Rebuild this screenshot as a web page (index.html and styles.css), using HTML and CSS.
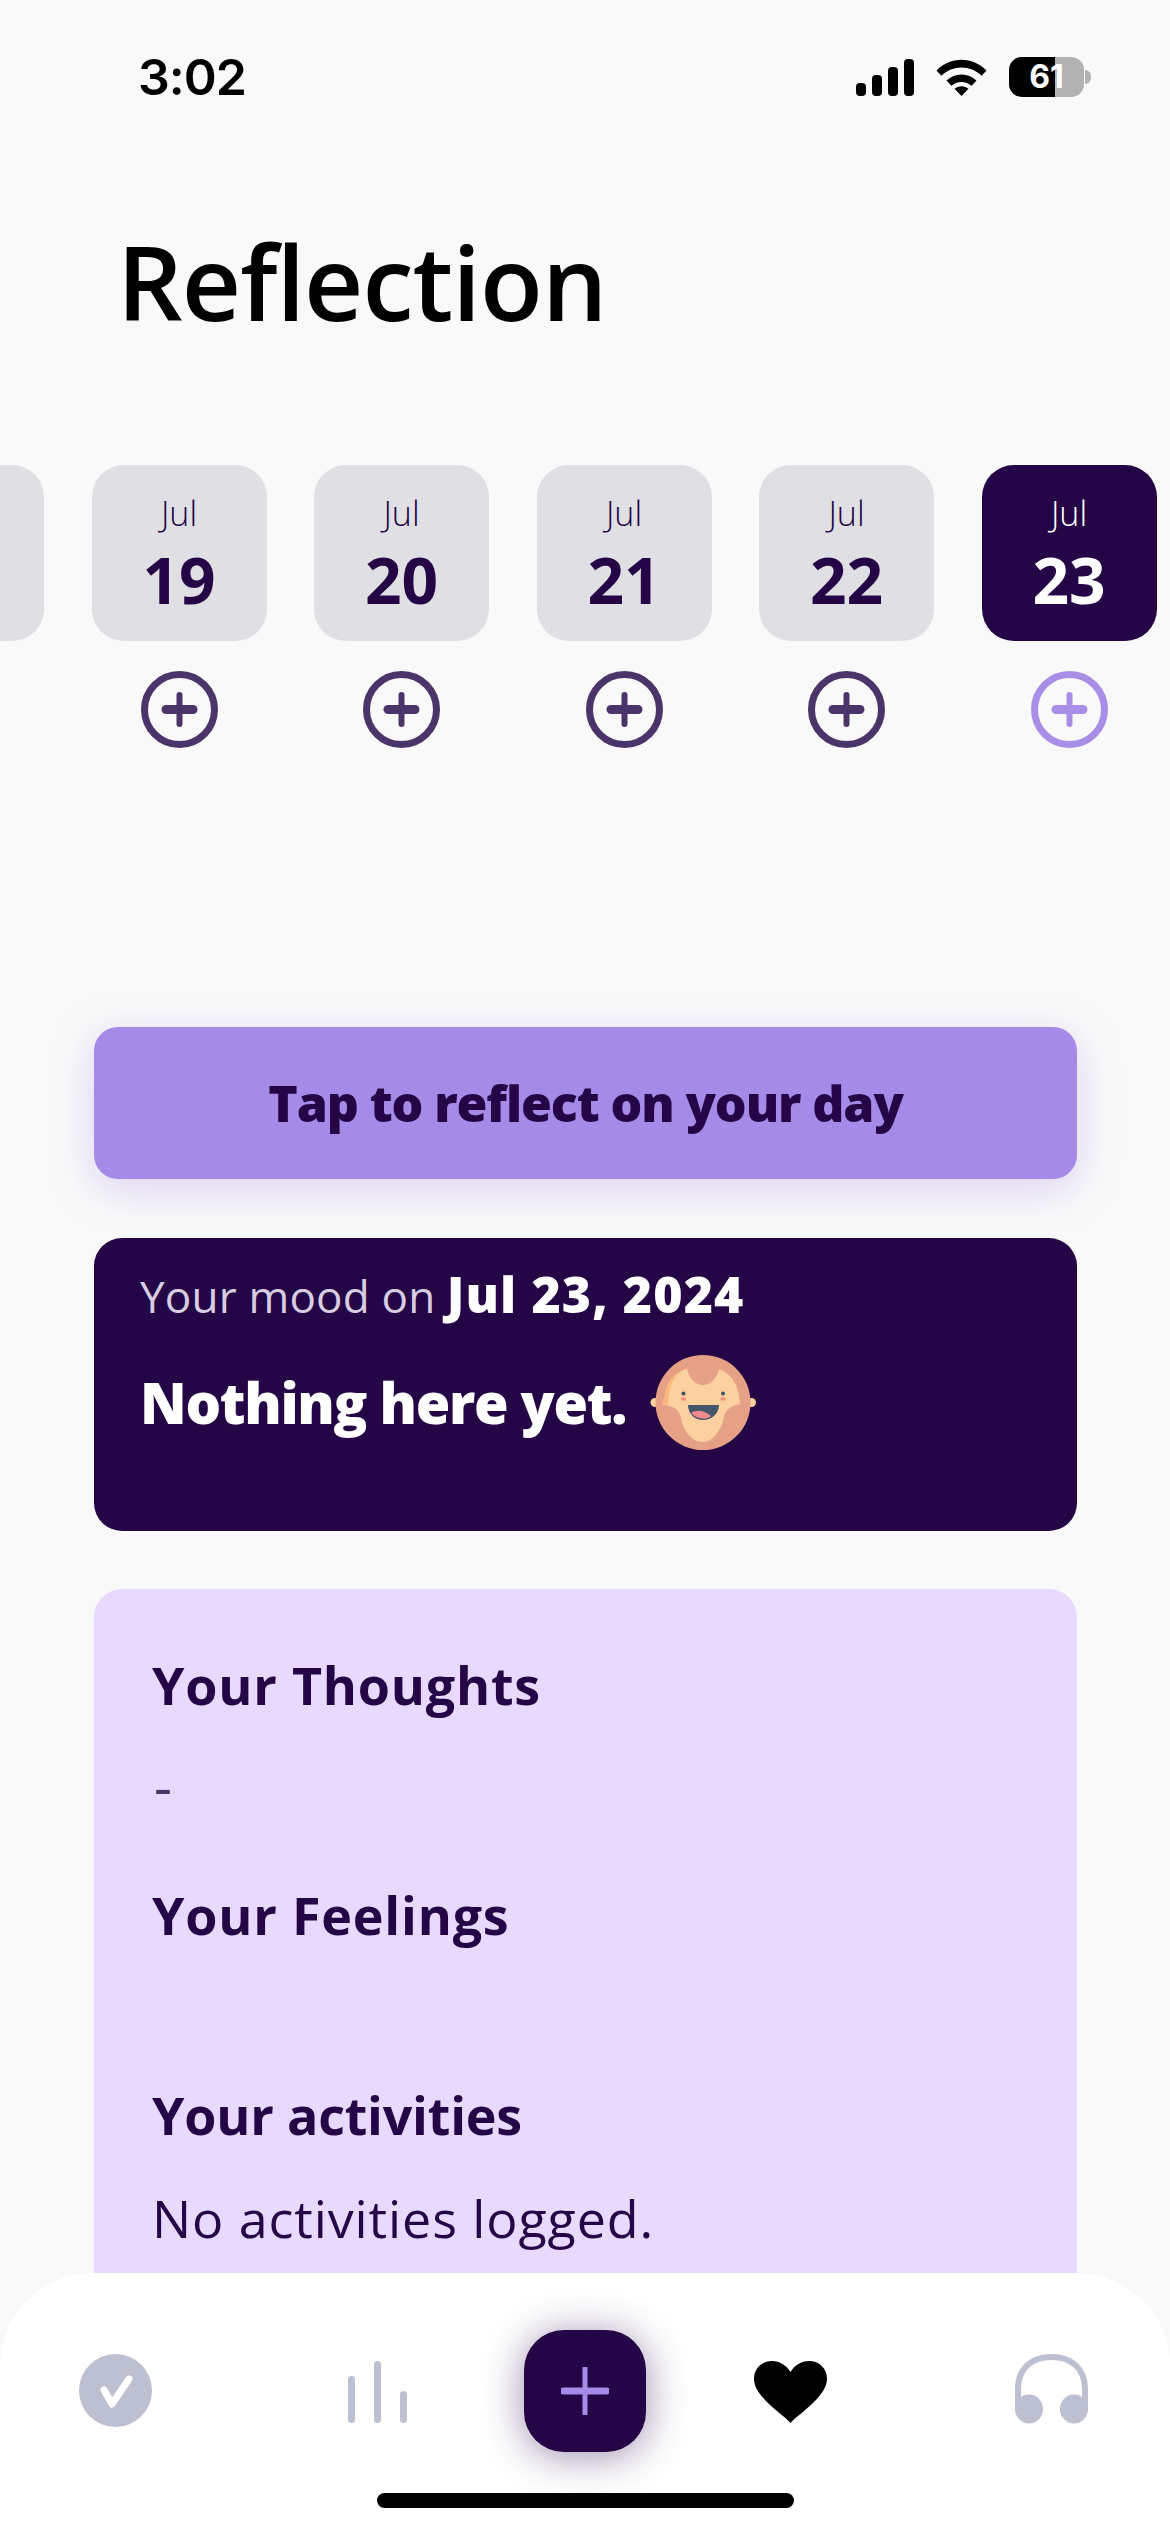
FILE: index.html
```html
<!DOCTYPE html>
<html lang="en">
<head>
<meta charset="utf-8">
<title>Reflection</title>
<link rel="stylesheet" href="styles.css">
</head>
<body>
<div class="page">
  <header class="status">
    <span class="time">3:02</span>
    <div class="status-icons">
      <svg class="signal" width="58" height="37" viewBox="0 0 58 37"><rect x="0" y="24" width="10" height="13" rx="4"/><rect x="16" y="16" width="10" height="21" rx="4"/><rect x="32" y="8" width="10" height="29" rx="4"/><rect x="48" y="0" width="10" height="37" rx="4"/></svg>
      <svg class="wifi" width="51" height="37" viewBox="0 0 51 37"><path d="M0.5 11.5C14.5 -2.8 36.5 -2.8 50.5 11.5L45.6 16.8C34.4 5.8 16.6 5.8 5.4 16.8Z"/><path d="M10.5 21.6C18.8 13.6 32.2 13.6 40.5 21.6L35.6 26.7C30 21.6 21 21.6 15.4 26.7Z"/><path d="M18.5 29.8C22.4 26.4 28.6 26.4 32.5 29.8L25.5 37Z"/></svg>
      <div class="battery"><span class="battery-level">61</span></div>
      <span class="battery-nub"></span>
    </div>
  </header>

  <h1 class="title">Reflection</h1>

  <section class="strip">
    <div class="day">
      <div class="date"></div>
    </div>
    <div class="day">
      <div class="date"><span class="month">Jul</span><span class="num">19</span></div>
      <svg class="add" width="77" height="77" viewBox="0 0 77 77"><circle cx="38.5" cy="38.5" r="35" fill="none" stroke-width="7"/><path d="M38.5 24V53" fill="none" stroke-width="6" stroke-linecap="round"/><path d="M25 38.5H52" fill="none" stroke-width="9" stroke-linecap="round"/></svg>
    </div>
    <div class="day">
      <div class="date"><span class="month">Jul</span><span class="num">20</span></div>
      <svg class="add" width="77" height="77" viewBox="0 0 77 77"><circle cx="38.5" cy="38.5" r="35" fill="none" stroke-width="7"/><path d="M38.5 24V53" fill="none" stroke-width="6" stroke-linecap="round"/><path d="M25 38.5H52" fill="none" stroke-width="9" stroke-linecap="round"/></svg>
    </div>
    <div class="day">
      <div class="date"><span class="month">Jul</span><span class="num">21</span></div>
      <svg class="add" width="77" height="77" viewBox="0 0 77 77"><circle cx="38.5" cy="38.5" r="35" fill="none" stroke-width="7"/><path d="M38.5 24V53" fill="none" stroke-width="6" stroke-linecap="round"/><path d="M25 38.5H52" fill="none" stroke-width="9" stroke-linecap="round"/></svg>
    </div>
    <div class="day">
      <div class="date"><span class="month">Jul</span><span class="num">22</span></div>
      <svg class="add" width="77" height="77" viewBox="0 0 77 77"><circle cx="38.5" cy="38.5" r="35" fill="none" stroke-width="7"/><path d="M38.5 24V53" fill="none" stroke-width="6" stroke-linecap="round"/><path d="M25 38.5H52" fill="none" stroke-width="9" stroke-linecap="round"/></svg>
    </div>
    <div class="day day-active">
      <div class="date"><span class="month">Jul</span><span class="num">23</span></div>
      <svg class="add" width="77" height="77" viewBox="0 0 77 77"><circle cx="38.5" cy="38.5" r="35" fill="none" stroke-width="7"/><path d="M38.5 24V53" fill="none" stroke-width="6" stroke-linecap="round"/><path d="M25 38.5H52" fill="none" stroke-width="9" stroke-linecap="round"/></svg>
    </div>
  </section>

  <main class="content">
    <div class="cta">Tap to reflect on your day</div>

    <div class="mood">
      <p class="mood-date"><span class="mood-label">Your mood on</span> <strong>Jul 23, 2024</strong></p>
      <div class="mood-row">
        <span class="mood-text">Nothing here yet.</span>
        <svg class="face" width="110" height="110" viewBox="15 17 110 110">
          <circle cx="24" cy="72.5" r="4.5" fill="#fdd09f"/>
          <circle cx="120.5" cy="72.5" r="4.5" fill="#fdd09f"/>
          <circle cx="72" cy="72.5" r="47.5" fill="#e5a085"/>
          <path d="M34 66C35 52 43 43 56 38.500C58 48 64 55 72 55C80 55 86 48 88 39C100 44 108 53 109 74C103 75 95 78 93 86C91 100 82 112 72 112C60 112 52 100 50 88C48 79 42 76 33 75Z" fill="#fdd09f"/>
          <path d="M34 66C35 54 41 45 50 41C41 49 38 58 37 75.500L31 75C31 72 33 69 34 66Z" fill="#fbb77f"/>
          <circle cx="52.500" cy="63.500" r="2" fill="#44505f"/>
          <circle cx="92" cy="63.500" r="2" fill="#44505f"/>
          <ellipse cx="52.500" cy="69" rx="2.800" ry="1.800" fill="#f2917f"/>
          <ellipse cx="92" cy="69" rx="2.800" ry="1.800" fill="#f2917f"/>
          <path d="M57 75H88C88 84 80 90 72 90C64 90 57 84 57 75Z" fill="#44566a"/>
          <path d="M60 83C66 79 74 81 80 86C76 90 66 90 60 83Z" fill="#f08a8f"/>
        </svg>
      </div>
    </div>

    <div class="details">
      <h2 class="h-thoughts">Your Thoughts</h2>
      <p class="dash">-</p>
      <h2 class="h-feelings">Your Feelings</h2>
      <h2 class="h-activities">Your activities</h2>
      <p class="none">No activities logged.</p>
    </div>
  </main>

  <nav class="tabbar">
    <div class="tabs">
      <svg class="tab-check" width="73" height="74" viewBox="0 0 73 74"><circle cx="36.500" cy="36.500" r="36.500" fill="#bcc0d0"/><path d="M25 36L33 50L50 25" fill="none" stroke="#fff" stroke-width="7" stroke-linecap="round" stroke-linejoin="round"/></svg>
      <svg class="tab-bars" width="59" height="74" viewBox="0 0 59 74"><rect x="0" y="22" width="7" height="47" rx="3.500"/><rect x="26" y="7" width="7" height="62" rx="3.500"/><rect x="52" y="37" width="7" height="32" rx="3.500"/></svg>
      <div class="tab-add"><svg width="48" height="48" viewBox="0 0 48 48"><path d="M24 1V47" stroke-width="5" stroke-linecap="round"/><path d="M2.500 24H45.500" stroke-width="7" stroke-linecap="round"/></svg></div>
      <svg class="tab-heart" width="73" height="74" viewBox="0 0 73 74"><path d="M36.500 69C30 61 0 43 0 25C0 14 8 7 18 7C26 7 32 11 36.500 18C41 11 47 7 55 7C65 7 73 14 73 25C73 43 43 61 36.500 69Z"/></svg>
      <svg class="tab-phones" width="73" height="74" viewBox="0 0 73 74"><path d="M3 58V35C3 14 17 3 36.500 3C56 3 70 14 70 35V58" fill="none" stroke="#bcc0d0" stroke-width="6"/><ellipse cx="14" cy="55" rx="14" ry="14.500" fill="#bcc0d0"/><ellipse cx="59" cy="55" rx="14" ry="14.500" fill="#bcc0d0"/></svg>
    </div>
    <div class="home-bar"></div>
  </nav>
</div>
</body>
</html>
```
FILE: styles.css
```css
* { box-sizing: border-box; }
html, body { margin: 0; padding: 0; }
body { background: #f9f9f9; font-family: "Open Sans", "Noto Sans", sans-serif; color: #240546; font-variant-ligatures: none; }
.page { position: relative; width: 1170px; height: 2532px; overflow: hidden; background: #f9f9f9; }

.status { display: flex; justify-content: space-between; align-items: center; height: 40px; margin-top: 57px; padding: 0 79px 0 138px; }
.time { font-family: "Inter", sans-serif; font-weight: 600; font-size: 50px; line-height: 40px; color: #000; letter-spacing: -1px; }
.status-icons { display: flex; align-items: center; }
.signal, .wifi { display: block; fill: #000; }
.wifi { margin-left: 22px; }
.battery { width: 75px; height: 40px; margin-left: 22px; border-radius: 13px; background: linear-gradient(90deg, #000 61%, #b2b2b2 61%); display: flex; align-items: center; justify-content: center; }
.battery-level { font-family: "Inter", sans-serif; font-weight: 700; font-size: 32px; color: #fff; line-height: 40px; }
.battery-nub { width: 6px; height: 14px; margin-left: 1px; border-radius: 0 7px 7px 0; background: #b2b2b2; }

.title { margin: 128px 0 0 117px; font-weight: 600; font-size: 103px; line-height: 112px; color: #000; letter-spacing: -1px; }

.strip { display: flex; gap: 47.5px; margin: 128px 0 0 -131px; }
.day { display: flex; flex-direction: column; align-items: center; flex: 0 0 175px; }
.date { display: flex; flex-direction: column; align-items: center; width: 175px; height: 176px; padding-top: 28px; border-radius: 32px; background: #e0dfe4; }
.month { font-weight: 300; font-size: 34px; line-height: 40px; }
.num { margin-top: 9px; font-weight: 700; font-size: 64px; line-height: 76px; }
.add { margin-top: 30px; stroke: #4a3469; }
.day-active .date { background: #240546; color: #fff; }
.day-active .add { stroke: #a98ee8; }

.content { padding: 0 93px 0 94px; margin-top: 279px; }
.cta { display: flex; align-items: center; justify-content: center; height: 152px; border-radius: 24px; background: #a68ae8; font-weight: 800; font-size: 50px; letter-spacing: -1.1px; box-shadow: 0 10px 40px rgba(166, 138, 232, .35); }
.mood { height: 293px; margin-top: 59px; padding: 28px 46px; border-radius: 28px; background: #240546; color: #fff; }
.mood-date { margin: 0; font-size: 44px; line-height: 56px; }
.mood-label { color: #d9cde2; font-weight: 400; letter-spacing: .2px; }
.mood-date strong { font-weight: 800; font-size: 50px; letter-spacing: 1.1px; }
.mood-row { display: flex; align-items: center; margin-top: 23px; }
.mood-text { font-weight: 800; font-size: 56px; line-height: 70px; letter-spacing: -1.3px; }
.face { display: block; margin-left: 20px; }

.details { height: 900px; margin-top: 58px; padding: 64px 58px; border-radius: 28px; background: #e7d9ff; }
.details h2 { margin: 0; font-weight: 700; font-size: 52px; line-height: 64px; letter-spacing: .8px; }
.dash { margin: 38px 0 0 2px; font-size: 56px; line-height: 60px; color: #4a3469; }
.details .h-feelings { margin-top: 68px; }
.details .h-activities { margin-top: 136px; letter-spacing: -.2px; }
.none { margin: 39px 0 0; font-weight: 400; font-size: 52px; line-height: 64px; letter-spacing: .9px; }

.tabbar { position: absolute; left: 0; right: 0; top: 2273px; height: 259px; padding-top: 57px; background: #fff; border-radius: 93px 93px 0 0; }
.tabs { display: flex; align-items: center; height: 122px; padding-left: 79px; }
.tabs svg { display: block; }
.tab-bars { margin-left: 196px; fill: #bcc0d0; }
.tab-add { display: flex; align-items: center; justify-content: center; width: 122px; height: 122px; margin-left: 117px; border-radius: 40px; background: #240546; box-shadow: 0 4px 40px rgba(36, 5, 70, .45); stroke: #a68ae8; }
.tab-heart { margin-left: 108px; fill: #000; }
.tab-phones { margin-left: 188px; }
.home-bar { width: 417px; height: 15px; margin: 41px auto 0; border-radius: 8px; background: #000; }
```
